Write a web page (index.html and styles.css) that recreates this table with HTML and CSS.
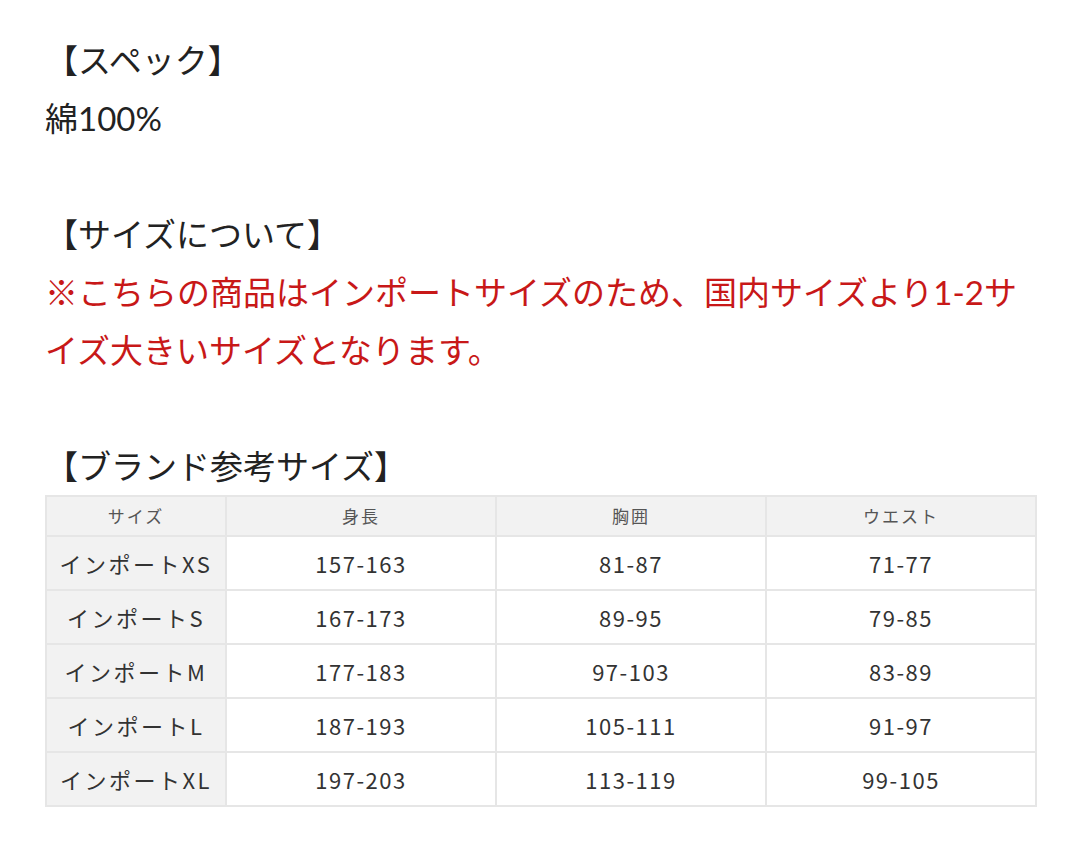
FILE: index.html
```html
<!DOCTYPE html>
<html lang="ja">
<head>
<meta charset="utf-8">
<link rel="stylesheet" href="styles.css">
</head>
<body>
<div class="content">
  <p class="line">【スペック】</p>
  <p class="line">綿100%</p>
  <p class="line blank">&nbsp;</p>
  <p class="line">【サイズについて】</p>
  <p class="note">※こちらの商品はインポートサイズのため、国内サイズより1-2サイズ大きいサイズとなります。</p>
  <p class="line blank">&nbsp;</p>
  <p class="line">【ブランド参考サイズ】</p>
  <table class="size-table">
    <colgroup>
      <col class="c1"><col class="c2"><col class="c3"><col class="c4">
    </colgroup>
    <thead>
      <tr><th>サイズ</th><th>身長</th><th>胸囲</th><th>ウエスト</th></tr>
    </thead>
    <tbody>
      <tr><th>インポートXS</th><td>157-163</td><td>81-87</td><td>71-77</td></tr>
      <tr><th>インポートS</th><td>167-173</td><td>89-95</td><td>79-85</td></tr>
      <tr><th>インポートM</th><td>177-183</td><td>97-103</td><td>83-89</td></tr>
      <tr><th>インポートL</th><td>187-193</td><td>105-111</td><td>91-97</td></tr>
      <tr><th>インポートXL</th><td>197-203</td><td>113-119</td><td>99-105</td></tr>
    </tbody>
  </table>
</div>
</body>
</html>
```

FILE: styles.css
```css
html, body {
  margin: 0;
  padding: 0;
  background: #ffffff;
}
.content {
  padding: 31px 45px 0 45px;
  font-family: Lato, "Noto Sans CJK JP", sans-serif;
  font-size: 33px;
  line-height: 58px;
  color: #222222;
}
.line, .note {
  margin: 0;
}
.note {
  color: #c81818;
}
.size-table {
  width: 990px;
  border-collapse: collapse;
  table-layout: fixed;
  font-family: "Noto Sans CJK JP", sans-serif;
  color: #333333;
  line-height: 1.2;
}
.c1 { width: 180px; }
.c2, .c3, .c4 { width: 270px; }
.size-table th, .size-table td {
  border: 2px solid #e6e6e6;
  text-align: center;
  padding: 0;
  font-weight: normal;
}
.size-table thead th {
  height: 38px;
  font-size: 17px;
  letter-spacing: 2px;
  color: #555555;
  background: #f2f2f2;
}
.size-table tbody th, .size-table tbody td {
  height: 52px;
  font-size: 22px;
  letter-spacing: 1.5px;
}
.size-table tbody th {
  background: #f2f2f2;
  letter-spacing: 2.5px;
}
```
